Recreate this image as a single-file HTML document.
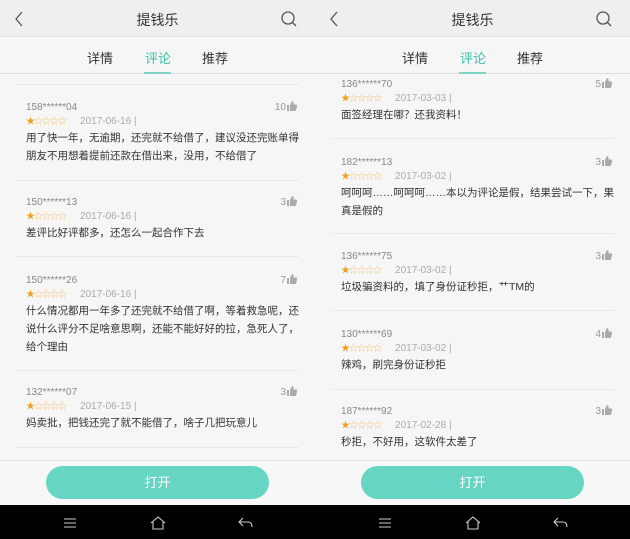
<!DOCTYPE html><html><head><meta charset="utf-8"><style>
*{margin:0;padding:0;box-sizing:border-box}
body{width:630px;height:539px;overflow:hidden;background:#f6f6f6;font-family:"Liberation Sans","Noto Sans CJK SC",sans-serif;position:relative}
.p{position:absolute;top:0;width:315px;height:539px;background:#f6f6f6;overflow:hidden}
.hd{position:absolute;top:0;left:0;width:315px;height:37px;background:#efefef;border-bottom:1px solid #e2e2e2}
.hd .t{position:absolute;left:0;width:315px;top:10px;text-align:center;font-size:14px;color:#333}
.tabs{position:absolute;top:37px;left:0;width:315px;height:37px;background:#f6f6f6;border-bottom:1px solid #ddd}
.tabs span{position:absolute;top:11px;font-size:13px;color:#333}
.tabs .a{color:#3cbfa8}
.ul{position:absolute;left:144px;top:35px;width:27px;height:2px;background:#7ed3c4}
.it{position:absolute;left:26px;width:276px}
.n{font-size:10px;color:#888;height:13px;line-height:13px}
.s{font-size:9px;color:#f3c170;height:14px;line-height:14px;letter-spacing:-1px}
.s b{color:#f0a020;font-weight:normal}
.s i{font-style:normal;color:#aaa;letter-spacing:0;margin-left:14px;font-size:10px}
.tx{font-size:10.5px;color:#333;line-height:18px;margin-top:1px}
.lk{position:absolute;right:4px;top:0;font-size:10px;color:#999}
.lk svg{vertical-align:-1px;margin-left:1px}
.sep{position:absolute;left:16px;width:283px;height:1px;background:#e8e8e8}
.ov{position:absolute;left:0;top:460px;width:315px;height:45px;background:rgba(246,246,246,.93);border-top:1px solid #e4e4e4}
.btn{position:absolute;left:46px;top:466px;width:223px;height:33px;border-radius:17px;background:#66d5c4;color:#fff;text-align:center;line-height:33px;font-size:13px}
.nav{position:absolute;left:0;top:505px;width:315px;height:34px;background:#000}
</style></head><body>
<svg width="0" height="0" style="position:absolute"><defs><g id="th"><path d="M0 4H2V10H0Z M3 4L5 0Q7 0 6.5 3.5H9.5Q10.5 4 10 5.5L9 9.5Q8.5 10 8 10H3Z" fill="#aaa"/></g></defs></svg>

<div class="p" style="left:0">
<div class="hd"><svg style="position:absolute;left:14px;top:11px" width="10" height="16"><path d="M8 1L2 8L8 15" stroke="#555" stroke-width="1.3" fill="none"/></svg><div class="t">提钱乐</div><svg style="position:absolute;left:281px;top:11px" width="16" height="16"><circle cx="7" cy="7" r="6" stroke="#555" stroke-width="1.3" fill="none"/><path d="M11 11L15 15" stroke="#555" stroke-width="1.3"/></svg></div>
<div class="tabs"><span style="left:87px">详情</span><span class="a" style="left:145px">评论</span><span style="left:202px">推荐</span><div class="ul"></div></div>
<div class="sep" style="top:84px"></div>
<div class="it" style="top:101px"><div class="n">158******04</div><div class="lk">10<svg width="11" height="10"><use href="#th"/></svg></div><div class="s"><b>★</b>☆☆☆☆<i>2017-06-16 |</i></div><div class="tx">用了快一年，无逾期，还完就不给借了，建议没还完账单得朋友不用想着提前还款在借出来，没用，不给借了</div></div>
<div class="sep" style="top:180px"></div>
<div class="it" style="top:196px"><div class="n">150******13</div><div class="lk">3<svg width="11" height="10"><use href="#th"/></svg></div><div class="s"><b>★</b>☆☆☆☆<i>2017-06-16 |</i></div><div class="tx">差评比好评都多，还怎么一起合作下去</div></div>
<div class="sep" style="top:256px"></div>
<div class="it" style="top:274px"><div class="n">150******26</div><div class="lk">7<svg width="11" height="10"><use href="#th"/></svg></div><div class="s"><b>★</b>☆☆☆☆<i>2017-06-16 |</i></div><div class="tx">什么情况都用一年多了还完就不给借了啊，等着救急呢，还说什么评分不足啥意思啊，还能不能好好的拉，急死人了，给个理由</div></div>
<div class="sep" style="top:370px"></div>
<div class="it" style="top:386px"><div class="n">132******07</div><div class="lk">3<svg width="11" height="10"><use href="#th"/></svg></div><div class="s"><b>★</b>☆☆☆☆<i>2017-06-15 |</i></div><div class="tx">妈卖批，把钱还完了就不能借了，啥子几把玩意儿</div></div>
<div class="sep" style="top:447px"></div>
<div class="ov"></div><div class="btn">打开</div>
<div class="nav"><svg style="position:absolute;left:63px;top:13px" width="14" height="10"><path d="M1 1H13M1 5H13M1 9H13" stroke="#ccc" stroke-width="1"/></svg><svg style="position:absolute;left:150px;top:11px" width="16" height="14"><path d="M1 7L8 1L15 7M3 6V13H13V6" stroke="#ccc" stroke-width="1.1" fill="none"/></svg><svg style="position:absolute;left:238px;top:12px" width="15" height="11"><path d="M5 1L1 5L5 9M1 5H10Q14 5 14 10" stroke="#ccc" stroke-width="1.1" fill="none"/></svg></div>
</div>

<div class="p" style="left:315px">
<div class="hd"><svg style="position:absolute;left:14px;top:11px" width="10" height="16"><path d="M8 1L2 8L8 15" stroke="#555" stroke-width="1.3" fill="none"/></svg><div class="t">提钱乐</div><svg style="position:absolute;left:281px;top:11px" width="16" height="16"><circle cx="7" cy="7" r="6" stroke="#555" stroke-width="1.3" fill="none"/><path d="M11 11L15 15" stroke="#555" stroke-width="1.3"/></svg></div>
<div class="tabs"><span style="left:87px">详情</span><span class="a" style="left:145px">评论</span><span style="left:202px">推荐</span><div class="ul"></div></div>
<div class="it" style="top:78px"><div class="n">136******70</div><div class="lk">5<svg width="11" height="10"><use href="#th"/></svg></div><div class="s"><b>★</b>☆☆☆☆<i>2017-03-03 |</i></div><div class="tx">面签经理在哪？还我资料！</div></div>
<div class="sep" style="top:138px"></div>
<div class="it" style="top:156px"><div class="n">182******13</div><div class="lk">3<svg width="11" height="10"><use href="#th"/></svg></div><div class="s"><b>★</b>☆☆☆☆<i>2017-03-02 |</i></div><div class="tx">呵呵呵……呵呵呵……本以为评论是假，结果尝试一下，果真是假的</div></div>
<div class="sep" style="top:233px"></div>
<div class="it" style="top:250px"><div class="n">136******75</div><div class="lk">3<svg width="11" height="10"><use href="#th"/></svg></div><div class="s"><b>★</b>☆☆☆☆<i>2017-03-02 |</i></div><div class="tx">垃圾骗资料的，填了身份证秒拒，艹TM的</div></div>
<div class="sep" style="top:310px"></div>
<div class="it" style="top:328px"><div class="n">130******69</div><div class="lk">4<svg width="11" height="10"><use href="#th"/></svg></div><div class="s"><b>★</b>☆☆☆☆<i>2017-03-02 |</i></div><div class="tx">辣鸡，刷完身份证秒拒</div></div>
<div class="sep" style="top:389px"></div>
<div class="it" style="top:405px"><div class="n">187******92</div><div class="lk">3<svg width="11" height="10"><use href="#th"/></svg></div><div class="s"><b>★</b>☆☆☆☆<i>2017-02-28 |</i></div><div class="tx">秒拒，不好用，这软件太差了</div></div>
<div class="ov"></div><div class="btn">打开</div>
<div class="nav"><svg style="position:absolute;left:63px;top:13px" width="14" height="10"><path d="M1 1H13M1 5H13M1 9H13" stroke="#ccc" stroke-width="1"/></svg><svg style="position:absolute;left:150px;top:11px" width="16" height="14"><path d="M1 7L8 1L15 7M3 6V13H13V6" stroke="#ccc" stroke-width="1.1" fill="none"/></svg><svg style="position:absolute;left:238px;top:12px" width="15" height="11"><path d="M5 1L1 5L5 9M1 5H10Q14 5 14 10" stroke="#ccc" stroke-width="1.1" fill="none"/></svg></div>
</div>
</body></html>
